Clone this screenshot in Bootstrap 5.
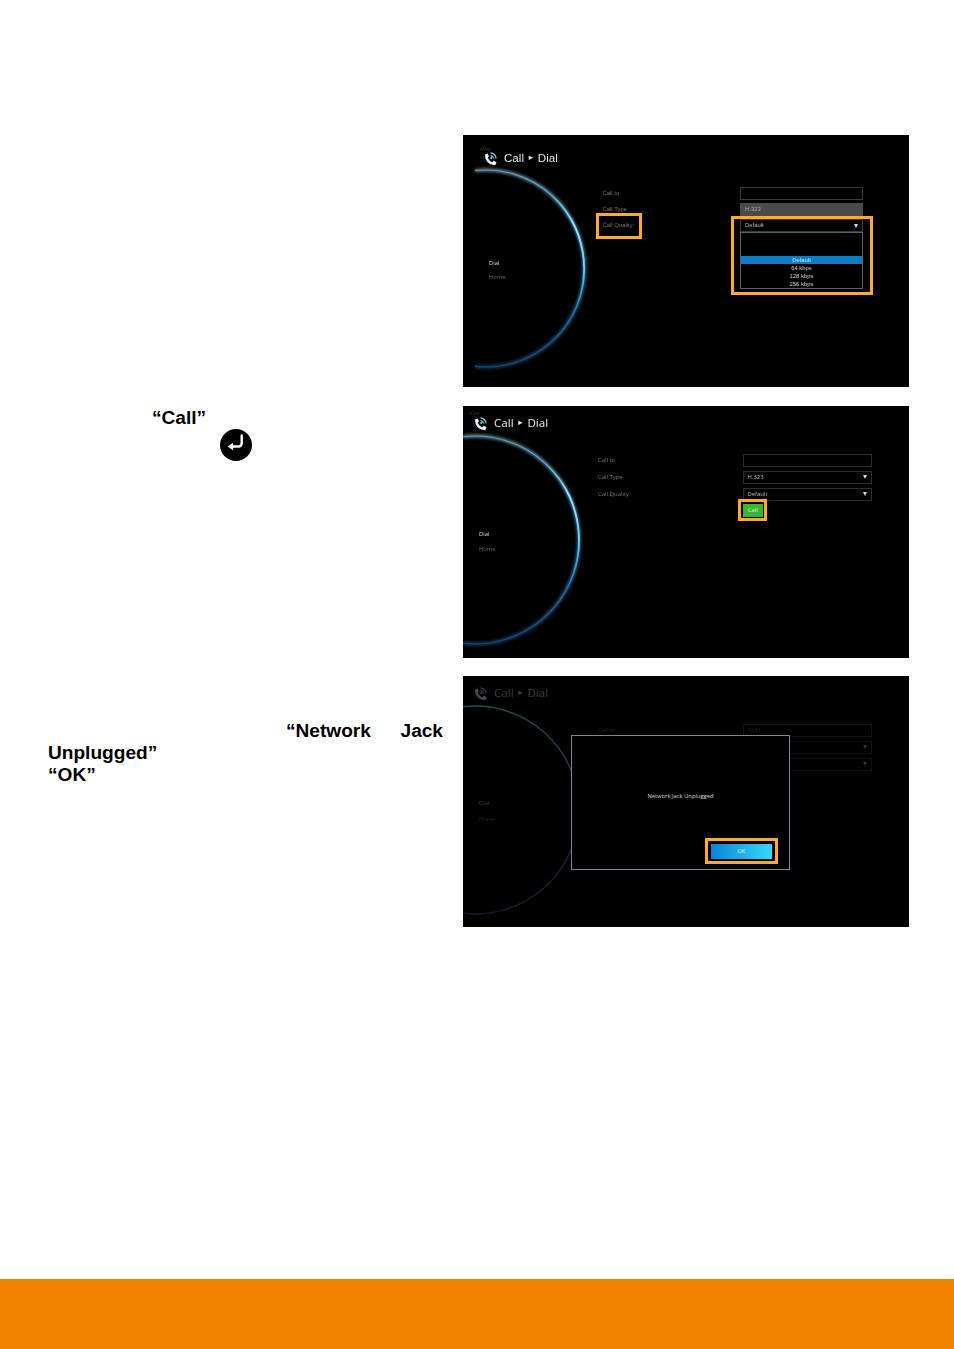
<!DOCTYPE html>
<html lang="en">
<head>
<meta charset="utf-8">
<title>Call Dial</title>
<link rel="stylesheet" href="https://cdn.jsdelivr.net/npm/bootstrap@5.3.0/dist/css/bootstrap.min.css">
<style>
html,body{height:100%;background:#fff}
.doc-page{min-height:1349px;height:1349px;padding-top:135px;font-family:"Liberation Sans",Arial,sans-serif;color:#000;overflow:hidden}
.step-row{width:909px}
.row-a{height:252px;margin-bottom:19px}
.row-b{height:252px;margin-bottom:18px}
.row-c{height:251px}
.step-text{width:463px;padding-left:48px;padding-right:20px;font-weight:700;font-size:19.1px;line-height:22px}
.pad-b{padding-top:1px}
.pad-c{padding-top:44px}
.ind-call{padding-left:104px}
.ind-enter{padding-left:172px;height:32px;line-height:0}
.ind-net{padding-left:238px}
.tv{position:relative;width:446px;background:#000;overflow:hidden;flex:none;font-family:"Open Sans","Liberation Sans",sans-serif}
.tv-inner{position:relative;height:100%;filter:blur(.3px)}
.tv-arc{position:absolute;left:0;top:0}
.tv-head{color:#e8e8e8;font-size:11.6px;line-height:16px;white-space:nowrap}
.head-a{padding:15px 0 0 20px;font-family:"Liberation Sans",sans-serif}
.head-b{padding:9px 0 0 10px}
.head-dim{color:#3c3c3c}
.tv-ico{width:16px;height:16px;margin-right:5px;flex:none}
.tv-tri{font-size:7.5px;margin:0 3.2px;line-height:1}
.tv-aver{position:absolute;font-size:5px;line-height:6px;color:#333}
.tv-menu{position:absolute;font-size:5.8px;line-height:8px;color:#fff}
.tv-menu span{position:absolute;left:0;white-space:nowrap}
.tv-form{display:grid;font-size:5.9px;align-items:center}
.form-a{grid-template-columns:137.5px 123px;margin:21px 0 0 139.5px;row-gap:3.6px;grid-auto-rows:12.6px;font-family:"Liberation Sans",sans-serif}
.form-b{grid-template-columns:144.5px 129.5px;margin:22.5px 0 0 135px;row-gap:4px;grid-auto-rows:13px}
.lbl{color:#767676;white-space:nowrap}
.lbl-dim{color:#222}
.fld{height:100%;border:1px solid #2c2c2c;color:#bbb;padding:0 4px;display:flex;align-items:center;justify-content:space-between;white-space:nowrap}
.fld-a{border-color:#3a3a3a}
.fld-gray{background:#4a4a4a;border-color:#4a4a4a;color:#aaa}
.fld-dim{border-color:#111;color:#2a2a2a}
.tri-d{width:0;height:0;border-left:2.5px solid transparent;border-right:2.5px solid transparent;border-top:4px solid #c9dcf5}
.tri-dim{border-top-color:#333}
.drop-list{grid-column:2;align-self:start;margin-top:-3.6px;height:57px;border:1px solid #4c6a6e;display:flex;flex-direction:column;color:#ccc;text-align:center;line-height:8px;font-size:5.9px;padding-top:23px}
.drop-on{background:#0e7dc8;color:#cfe6f5}
.hl{position:absolute;border:3px solid #ffa92c}
.hl-q{left:133px;top:78px;width:46px;height:26px}
.hl-d{left:268px;top:81px;width:142px;height:79px}
.hl-c{left:275px;top:93px;width:29px;height:22px}
.hl-o{left:242px;top:162px;width:73px;height:26px}
.btn-call{position:absolute;left:280px;top:98px;width:19.5px;height:13px;background:#3db52f;color:#dff5dc;font-size:5.9px;display:flex;align-items:center;justify-content:center}
.tv-dlg{position:absolute;left:108px;top:59px;width:219px;height:134.5px;background:#000;border:1px solid #6d8ca1;color:#ddd;font-size:5.8px}
.dlg-msg{text-align:center;line-height:8px;padding-top:56px}
.btn-ok{position:absolute;left:139px;top:108px;width:60.5px;height:14.5px;background:linear-gradient(90deg,#0b84d8,#35d8fb);color:#e6f7ff;font-size:5.5px;display:flex;align-items:center;justify-content:center}
.doc-foot{height:70px;background:#f08300;flex:none}
</style>
</head>
<body>
<svg width="0" height="0" class="position-absolute">
  <defs>
    <linearGradient id="arcg" x1="0" y1="0" x2="0" y2="1">
      <stop offset="0" stop-color="#6f98aa"/>
      <stop offset=".3" stop-color="#5cc0f0"/>
      <stop offset=".55" stop-color="#2f8fd0"/>
      <stop offset="1" stop-color="#124a78"/>
    </linearGradient>
    <linearGradient id="arcs" x1="0" y1="0" x2="0" y2="1">
      <stop offset="0" stop-color="#8fdcff" stop-opacity="0"/>
      <stop offset=".25" stop-color="#9fe2ff"/>
      <stop offset=".6" stop-color="#7fd0f5"/>
      <stop offset="1" stop-color="#3f9fd8" stop-opacity="0"/>
    </linearGradient>
    <linearGradient id="arcd" x1="0" y1="0" x2="0" y2="1">
      <stop offset="0" stop-color="#1f4c5c"/>
      <stop offset=".5" stop-color="#143644"/>
      <stop offset="1" stop-color="#0b1f2a"/>
    </linearGradient>
    <filter id="glow" x="-20%" y="-20%" width="140%" height="140%"><feGaussianBlur stdDeviation="1.6"/></filter>
    <filter id="soft" x="-20%" y="-20%" width="140%" height="140%"><feGaussianBlur stdDeviation=".5"/></filter>
    <symbol id="phone" viewBox="0 0 16 16">
      <circle cx="6" cy="7.5" r="5.6" fill="none" stroke="#2a2a2a" stroke-width=".8"/>
      <path d="M3.4 5.4C3 9.6 6.6 13.8 11.2 14" fill="none" stroke="#dceefa" stroke-width="2.6"/>
      <path d="M1.8 4.8l2.8-1.2 1.4 3-2.4 1.1zM9 12.6l1.8-1.8 2.8 1.8-1.6 2.8z" fill="#f0f8fd"/>
      <path d="M7.6 5.6a2.8 2.8 0 0 1 2.8 2.8M7.6 3a5.4 5.4 0 0 1 5.4 5.4" fill="none" stroke="#7cc0e6" stroke-width="1.3"/>
      <circle cx="8.2" cy="8" r="1" fill="#9cd0ee"/>
    </symbol>
  </defs>
</svg>

<div class="doc-page d-flex flex-column">
  <main class="flex-grow-1">
    <section class="step-row row-a d-flex">
      <div class="step-text"></div>
      <div class="tv row-a"><div class="tv-inner">
        <svg class="tv-arc" width="446" height="252" viewBox="0 0 446 252">
          <path d="M12 35.6A98.5 98.5 0 1 1 12 231.4" fill="none" stroke="url(#arcg)" stroke-width="3.4" filter="url(#glow)" opacity=".8"/>
          <path d="M12 35.6A98.5 98.5 0 1 1 12 231.4" fill="none" stroke="url(#arcg)" stroke-width="1.1"/>
          <path d="M85.8 58A98.5 98.5 0 0 1 107.8 182.8" fill="none" stroke="url(#arcs)" stroke-width="1.7" filter="url(#soft)"/>
        </svg>
        <span class="tv-aver" style="left:17px;top:11px">AVer</span>
        <div class="tv-head head-a d-flex align-items-center position-relative">
          <svg class="tv-ico"><use href="#phone"/></svg><span>Call</span><span class="tv-tri">►</span><span>Dial</span>
        </div>
        <div class="tv-menu" style="left:26px;top:124px"><span style="top:0;color:#ddd">Dial</span><span style="top:14px;color:#666">Home</span></div>
        <div class="tv-form form-a position-relative">
          <span class="lbl">Call to</span><div class="fld fld-a"></div>
          <span class="lbl">Call Type</span><div class="fld fld-gray">H.323</div>
          <span class="lbl">Call Quality</span><div class="fld fld-a">Default<i class="tri-d"></i></div>
          <div class="drop-list">
            <div class="drop-on">Default</div><div>64 kbps</div><div>128 kbps</div><div>256 kbps</div>
          </div>
        </div>
        <div class="hl hl-q"></div>
        <div class="hl hl-d"></div>
      </div></div>
    </section>

    <section class="step-row row-b d-flex">
      <div class="step-text pad-b">
        <div class="ind-call">“Call”</div>
        <div class="ind-enter">
          <svg width="32" height="32" viewBox="0 0 32 32"><circle cx="16" cy="16" r="16" fill="#000"/><path d="M21.7 6.5v8a3 3 0 0 1-3 3H11" fill="none" stroke="#fff" stroke-width="2.4" stroke-linecap="round"/><path d="M7.5 17.5l5.6-3.8v7.6z" fill="#fff"/></svg>
        </div>
      </div>
      <div class="tv row-b"><div class="tv-inner">
        <svg class="tv-arc" width="446" height="252" viewBox="0 0 446 252">
          <path d="M0 30.7A104 104 0 1 1 0 237.3" fill="none" stroke="url(#arcg)" stroke-width="3.4" filter="url(#glow)" opacity=".8"/>
          <path d="M0 30.7A104 104 0 1 1 0 237.3" fill="none" stroke="url(#arcg)" stroke-width="1.1"/>
          <path d="M78.8 54.3A104 104 0 0 1 102 186" fill="none" stroke="url(#arcs)" stroke-width="1.7" filter="url(#soft)"/>
        </svg>
        <span class="tv-aver" style="left:6px;top:4px">AVer</span>
        <div class="tv-head head-b d-flex align-items-center position-relative">
          <svg class="tv-ico"><use href="#phone"/></svg><span>Call</span><span class="tv-tri">►</span><span>Dial</span>
        </div>
        <div class="tv-menu" style="left:16px;top:123.5px"><span style="top:0;color:#ddd">Dial</span><span style="top:15.5px;color:#666">Home</span></div>
        <div class="tv-form form-b position-relative">
          <span class="lbl">Call to</span><div class="fld"></div>
          <span class="lbl">Call Type</span><div class="fld">H.323<i class="tri-d"></i></div>
          <span class="lbl">Call Quality</span><div class="fld">Default<i class="tri-d"></i></div>
        </div>
        <div class="btn-call">Call</div>
        <div class="hl hl-c"></div>
      </div></div>
    </section>

    <section class="step-row row-c d-flex">
      <div class="step-text pad-c">
        <div class="ind-net d-flex justify-content-between"><span>“Network</span><span>Jack</span></div>
        <div>Unplugged”</div>
        <div>“OK”</div>
      </div>
      <div class="tv row-c"><div class="tv-inner">
        <svg class="tv-arc" width="446" height="251" viewBox="0 0 446 251">
          <path d="M0 30.7A104 104 0 1 1 0 237.3" fill="none" stroke="url(#arcd)" stroke-width="1.4"/>
        </svg>
        <div class="tv-head head-b head-dim d-flex align-items-center position-relative">
          <svg class="tv-ico" opacity=".3"><use href="#phone"/></svg><span>Call</span><span class="tv-tri">►</span><span>Dial</span>
        </div>
        <div class="tv-menu" style="left:16px;top:123px"><span style="top:0;color:#3a3a3a">Dial</span><span style="top:15.5px;color:#282828">Home</span></div>
        <div class="tv-form form-b position-relative">
          <span class="lbl-dim">Call to</span><div class="fld fld-dim">1231</div>
          <span></span><div class="fld fld-dim">&nbsp;<i class="tri-d tri-dim"></i></div>
          <span></span><div class="fld fld-dim">&nbsp;<i class="tri-d tri-dim"></i></div>
        </div>
        <div class="tv-dlg">
          <div class="dlg-msg">Network Jack Unplugged</div>
          <div class="btn-ok">OK</div>
        </div>
        <div class="hl hl-o"></div>
      </div></div>
    </section>
  </main>
  <footer class="doc-foot"></footer>
</div>
<script src="https://cdn.jsdelivr.net/npm/bootstrap@5.3.0/dist/js/bootstrap.bundle.min.js"></script>
</body>
</html>
